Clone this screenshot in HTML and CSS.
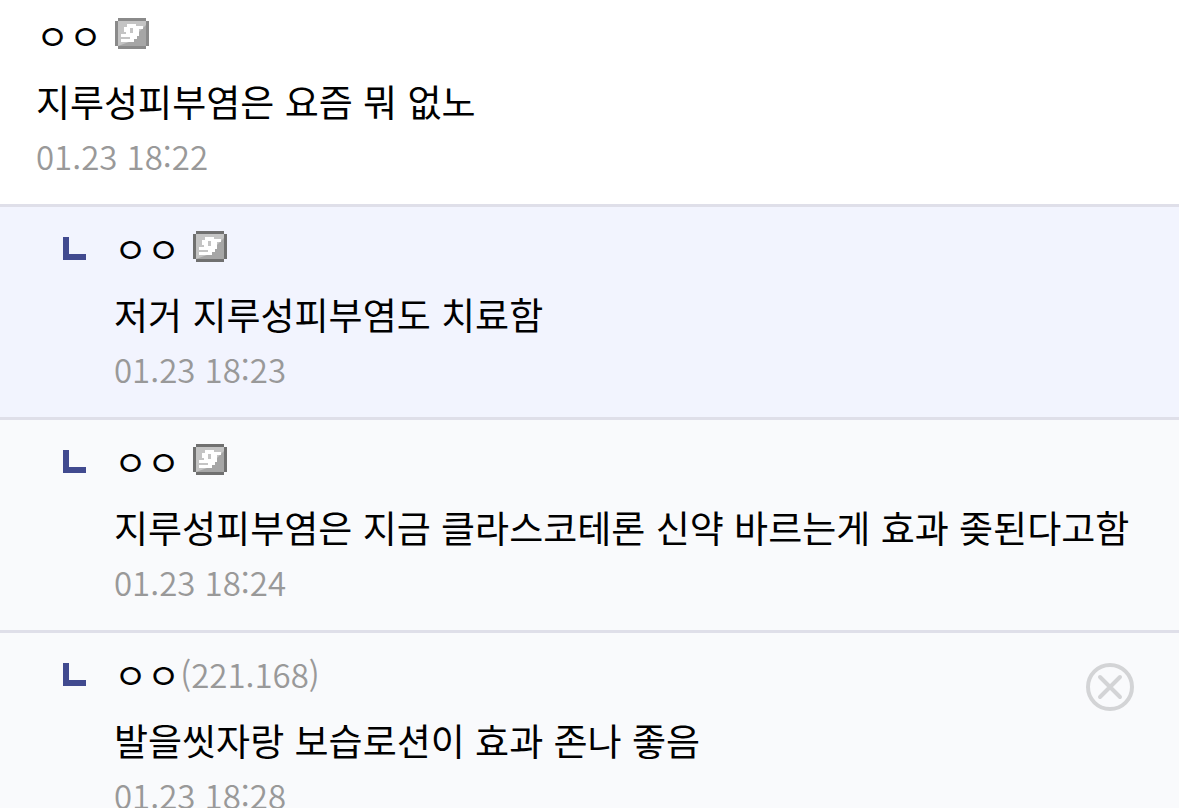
FILE: index.html
```
<!DOCTYPE html>
<html lang="ko">

<head>
    <meta charset="UTF-8">
    <meta name="viewport" content="width=device-width, initial-scale=1.0">
    <title>댓글</title>
    <link rel="stylesheet" href="styles.css">
</head>

<body>

    <!-- shared icons -->
    <svg class="sprite" aria-hidden="true">
        <symbol id="icon-gallog" viewBox="0 0 34 31">
            <path fill="currentColor" d="M3 0h28v3h3v25h-3v3H3v-3H0V3h3z" />
            <path fill="#a6a6a6" d="M3 3h28v25H3z" />
            <path fill="#c4c4c4" d="M3 3h28v4L14 24l-11 4z" />
            <path fill="#fff" d="M12 6h9v2h7v3h-4v7h-2v3h-3v3H6v-3h9v-2H6v-3h5v-2H9v-5h3zM15 10v5h3v-5z" />
        </symbol>
        <symbol id="icon-reply" viewBox="0 0 23 23">
            <path fill="#414a8f" d="M0 0h6v17h17v6H0z" />
        </symbol>
        <symbol id="icon-close" viewBox="0 0 48 48">
            <circle cx="24" cy="24" r="22" fill="none" stroke="#d3d4d6" stroke-width="4" />
            <path d="M14 14l20 20M34 14L14 34" fill="none" stroke="#d3d4d6" stroke-width="4" stroke-linecap="round" />
        </symbol>
    </svg>

    <ul class="comment-list">
        <li class="comment">
            <div class="comment-body">
                <div class="writer">
                    <span class="nick">ㅇㅇ</span>
                    <svg class="gallog" role="img" aria-label="갤로그"><use href="#icon-gallog" /></svg>
                </div>
                <p class="text">지루성피부염은 요즘 뭐 없노</p>
                <time class="date">01.23 18:22</time>
            </div>
        </li>
        <li class="comment reply selected">
            <svg class="reply-mark" aria-hidden="true"><use href="#icon-reply" /></svg>
            <div class="comment-body">
                <div class="writer">
                    <span class="nick">ㅇㅇ</span>
                    <svg class="gallog dark" role="img" aria-label="갤로그"><use href="#icon-gallog" /></svg>
                </div>
                <p class="text">저거 지루성피부염도 치료함</p>
                <time class="date">01.23 18:23</time>
            </div>
        </li>
        <li class="comment reply">
            <svg class="reply-mark" aria-hidden="true"><use href="#icon-reply" /></svg>
            <div class="comment-body">
                <div class="writer">
                    <span class="nick">ㅇㅇ</span>
                    <svg class="gallog dark" role="img" aria-label="갤로그"><use href="#icon-gallog" /></svg>
                </div>
                <p class="text">지루성피부염은 지금 클라스코테론 신약 바르는게 효과 좆된다고함</p>
                <time class="date">01.23 18:24</time>
            </div>
        </li>
        <li class="comment reply">
            <svg class="reply-mark" aria-hidden="true"><use href="#icon-reply" /></svg>
            <div class="comment-body">
                <div class="writer">
                    <span class="nick">ㅇㅇ</span>
                    <span class="ip">(221.168)</span>
                </div>
                <p class="text">발을씻자랑 보습로션이 효과 존나 좋음</p>
                <time class="date">01.23 18:28</time>
            </div>
            <button type="button" class="delete" aria-label="삭제">
                <svg><use href="#icon-close" /></svg>
            </button>
        </li>
    </ul>

</body>

</html>
```
FILE: styles.css
```
body {
    font-family: "Noto Sans CJK KR", sans-serif;
    background-color: #fff;
    color: #000;
    margin: 0;
}

.sprite {
    display: none;
}

.comment-list {
    list-style: none;
    margin: 0;
    padding: 0;
}

.comment {
    display: flex;
    align-items: flex-start;
    padding: 12px 36px 26px;
    border-bottom: 3px solid #dfdfe9;
}

.reply {
    padding: 18px 45px 26px 63px;
    background-color: #f9fafc;
}

.selected {
    background-color: #f2f4fe;
}

.reply-mark {
    flex: none;
    width: 23px;
    height: 23px;
    margin: 12px 28px 0 0;
}

.comment-body {
    flex: 1;
}

.writer {
    display: flex;
    align-items: center;
    height: 46px;
    margin-bottom: 15px;
}

.nick {
    font-size: 36px;
}

.gallog {
    width: 34px;
    height: 31px;
    margin: 0 0 4px 13px;
    color: #8a8a8a;
}

.gallog.dark {
    color: #707070;
}

.ip {
    font-size: 33px;
    font-weight: 350;
    color: #999;
}

.text {
    font-size: 37px;
    line-height: 56px;
    margin: 0 0 5px;
}

.date {
    display: block;
    font-size: 33px;
    font-weight: 350;
    line-height: 44px;
    color: #999;
}

.delete {
    flex: none;
    width: 48px;
    height: 48px;
    margin-top: 12px;
    padding: 0;
    border: none;
    background: none;
    cursor: pointer;
}

.delete svg {
    display: block;
    width: 48px;
    height: 48px;
}
```
